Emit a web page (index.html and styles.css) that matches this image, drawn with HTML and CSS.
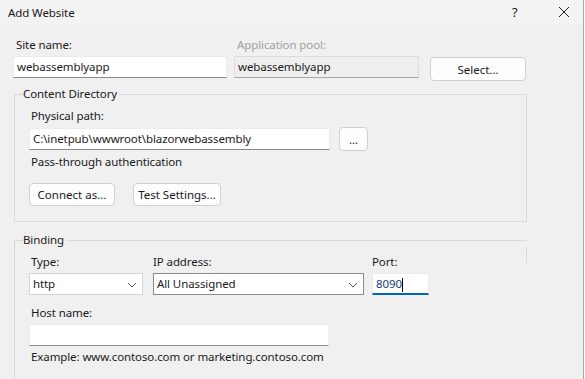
FILE: index.html
```html
<!DOCTYPE html>
<html lang="en">
<head>
    <meta charset="utf-8"/>
    <title>Add Website</title>
    <link rel="stylesheet" href="styles.css">
</head>
<body>
<div class="screen">
    <div class="dialog">
        <header class="titlebar">
            <span class="title">Add Website</span>
            <span class="help">?</span>
            <svg class="close" width="12" height="12" viewBox="0 0 12 12">
                <path d="M1 1 L11 11 M11 1 L1 11" stroke="#1a1a1a" stroke-width="1"/>
            </svg>
        </header>

        <main class="content">
            <div class="top-row">
                <div class="field site">
                    <label>Site name:</label>
                    <div class="input">webassemblyapp</div>
                </div>
                <div class="field pool">
                    <label class="muted">Application pool:</label>
                    <div class="input disabled">webassemblyapp</div>
                </div>
                <button class="btn select">Select...</button>
            </div>

            <fieldset class="group content-dir">
                <legend>Content Directory</legend>
                <div class="inner">
                    <label>Physical path:</label>
                    <div class="path-row">
                        <div class="input path">C:\inetpub\wwwroot\blazorwebassembly</div>
                        <button class="btn dots">...</button>
                    </div>
                    <p class="note">Pass-through authentication</p>
                    <div class="btn-row">
                        <button class="btn connect">Connect as...</button>
                        <button class="btn test">Test Settings...</button>
                    </div>
                </div>
            </fieldset>

            <fieldset class="group binding">
                <legend>Binding</legend>
                <div class="inner">
                    <div class="bind-row">
                        <div class="field type">
                            <label>Type:</label>
                            <div class="input combo">http
                                <svg class="chev" width="10" height="6" viewBox="0 0 10 6"><path d="M1 1 L5 5 L9 1" fill="none" stroke="#555" stroke-width="1"/></svg>
                            </div>
                        </div>
                        <div class="field ip">
                            <label>IP address:</label>
                            <div class="input combo boxed">All Unassigned
                                <svg class="chev" width="10" height="6" viewBox="0 0 10 6"><path d="M1 1 L5 5 L9 1" fill="none" stroke="#555" stroke-width="1"/></svg>
                            </div>
                        </div>
                        <div class="field port">
                            <label>Port:</label>
                            <div class="input focused">8090<span class="caret"></span></div>
                        </div>
                    </div>
                    <label>Host name:</label>
                    <div class="input host"></div>
                    <p class="note">Example: www.contoso.com or marketing.contoso.com</p>
                </div>
            </fieldset>
        </main>
    </div>
    <div class="behind"></div>
</div>
</body>
</html>
```

FILE: styles.css
```css
body {
    margin: 0;
    padding: 0;
    font-family: "Noto Sans", "Open Sans", sans-serif;
    font-size: 11.5px;
    letter-spacing: -0.1px;
    color: #1a1a1a;
    background-color: #f0f0f0;
}
.screen {
    display: flex;
    width: 585px;
    height: 379px;
    overflow: hidden;
}
.dialog {
    flex: 1;
    background-color: #f0f0f0;
    border-right: 1px solid #a8a8a8;
}
.behind {
    width: 1px;
    background-color: #fafafa;
}

.titlebar {
    height: 24px;
    display: flex;
    align-items: center;
    padding: 0 0 0 8px;
    background-color: #f3f3f3;
}
.title {
    flex: 1;
}
.help {
    width: 14px;
    margin-right: 32px;
    font-size: 13px;
}
.close {
    margin-right: 13px;
}

.content {
    padding: 13px 0 0 13px;
}
label {
    display: block;
    height: 16px;
    line-height: 16px;
    margin-bottom: 3px;
    padding-left: 3px;
}
.muted {
    color: #a0a0a0;
}
.input {
    box-sizing: border-box;
    height: 22px;
    line-height: 20px;
    padding: 0 3px;
    background-color: #fff;
    border: 1px solid #ececec;
    border-bottom-color: #8a8a8a;
    white-space: nowrap;
}
.input.disabled {
    background-color: #efefef;
    border-color: #dcdcdc;
    border-bottom-color: #a8a8a8;
}
.btn {
    box-sizing: border-box;
    font: inherit;
    color: #1a1a1a;
    background-color: #fdfdfd;
    border: 1px solid #d0d0d0;
    border-radius: 4px;
    padding: 0;
    height: 24px;
}

.top-row {
    display: flex;
    align-items: flex-start;
}
.site {
    width: 214px;
}
.pool {
    width: 185px;
    margin-left: 7px;
}
.select {
    width: 96px;
    margin: 20px 0 0 11px;
}

.group {
    margin: 5px 0 0 1px;
    width: 513px;
    box-sizing: border-box;
    padding: 0 0 0 8px;
    border: 1px solid #dadada;
}
.group legend {
    padding: 0 2px 0 0;
    height: 16px;
    line-height: 16px;
}
.inner {
    padding-left: 6px;
}
.inner label {
    padding-left: 2px;
}
.content-dir {
    padding-bottom: 15px;
}
.content-dir .inner label {
    margin-top: 6px;
}
.path-row {
    display: flex;
    align-items: center;
}
.path {
    width: 301px;
    height: 22px;
}
.dots {
    width: 29px;
    margin-left: 9px;
}
.note {
    margin: 3px 0 0 2px;
    height: 16px;
    line-height: 16px;
}
.btn-row {
    display: flex;
    gap: 18px;
    margin-top: 13px;
}
.connect {
    width: 86px;
    height: 23px;
}
.test {
    width: 88px;
    height: 23px;
}

.binding {
    margin-top: 10px;
    height: 160px;
    border-right: none;
    border-bottom: none;
    position: relative;
}
.binding::after {
    content: "";
    position: absolute;
    right: 0;
    top: -1px;
    width: 1px;
    height: 16px;
    background-color: #dadada;
}
.binding .inner > label {
    margin-top: 10px;
}
.bind-row {
    display: flex;
    margin-top: 6px;
}
.type {
    width: 114px;
}
.ip {
    width: 211px;
    margin-left: 10px;
}
.port {
    width: 57px;
    margin-left: 8px;
}
.inner .ip label,
.inner .port label {
    padding-left: 0;
}
.combo {
    position: relative;
    border-color: #d4d4d4;
}
.combo.boxed {
    border-color: #8a8a8a;
    border-top-color: #8a8a8a;
}
.chev {
    position: absolute;
    right: 5px;
    top: 8px;
}
.focused {
    color: #1d3b7a;
    border-color: #ececec;
    border-bottom: 2px solid #0067c0;
    line-height: 20px;
}
.caret {
    display: inline-block;
    width: 1px;
    height: 14px;
    vertical-align: middle;
    background-color: #000;
}
.host {
    width: 300px;
}
```
